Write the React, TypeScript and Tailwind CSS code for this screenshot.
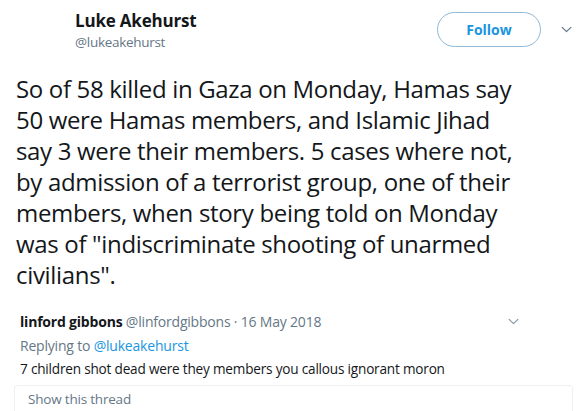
import React from "react";

const LINES = [
  "So of 58 killed in Gaza on Monday, Hamas say",
  "50 were Hamas members, and Islamic Jihad",
  "say 3 were their members. 5 cases where not,",
  "by admission of a terrorist group, one of their",
  "members, when story being told on Monday",
  'was of "indiscriminate shooting of unarmed',
  'civilians".',
];

function Chevron({ className }: { className?: string }) {
  return (
    <svg className={className} viewBox="0 0 12 8" fill="none" aria-hidden>
      <path d="M1 1.5l5 5 5-5" stroke="currentColor" strokeWidth="1.4" strokeLinecap="round" strokeLinejoin="round" />
    </svg>
  );
}

export default function App() {
  return (
    <div className="w-[587px] h-[411px] overflow-hidden bg-white font-['Open_Sans','Noto_Sans',sans-serif] text-[#14171a]">
      <div className="flex items-start pl-[75px] pr-[15px] pt-[10px]">
        <div className="flex-1">
          <div className="text-[17px] font-bold leading-[22px] tracking-[-0.2px]">Luke Akehurst</div>
          <div className="text-[13.5px] leading-[20px] text-[#657786] tracking-[-0.3px]">@lukeakehurst</div>
        </div>
        <button className="mt-[2px] h-[35px] w-[104px] rounded-full border border-[#8fb9d6] text-[14px] font-bold text-[#1b95e0]">
          Follow
        </button>
        <Chevron className="ml-[20px] mt-[16px] h-[7px] w-[11px] text-[#657786]" />
      </div>

      <div className="mt-[21px] pl-[16px] text-[24px] leading-[31px] tracking-[-0.33px]">
        {LINES.map((l) => (
          <div key={l} className="whitespace-nowrap">
            {l}
          </div>
        ))}
      </div>

      <div className="mt-[20px] pl-[20px] pr-[68px] text-[14px] leading-[23.5px] tracking-[-0.2px]">
        <div className="flex items-center justify-between">
          <div>
            <span className="font-bold">linford gibbons</span>{" "}
            <span className="text-[#657786]">@linfordgibbons · 16 May 2018</span>
          </div>
          <Chevron className="h-[7px] w-[11px] text-[#8899a6]" />
        </div>
        <div className="text-[#657786]">
          Replying to <span className="text-[#1b95e0]">@lukeakehurst</span>
        </div>
        <div className="text-[13.6px] tracking-[-0.2px]">7 children shot dead were they members you callous ignorant moron</div>
      </div>

      <div className="ml-[14px] mr-[14px] mt-[4px] h-[40px] rounded-t-[4px] border border-b-0 border-[#eef1f3] pl-[13px] pt-[3px] text-[13.5px] leading-[20px] text-[#657786] tracking-[-0.2px]">
        Show this thread
      </div>
    </div>
  );
}
